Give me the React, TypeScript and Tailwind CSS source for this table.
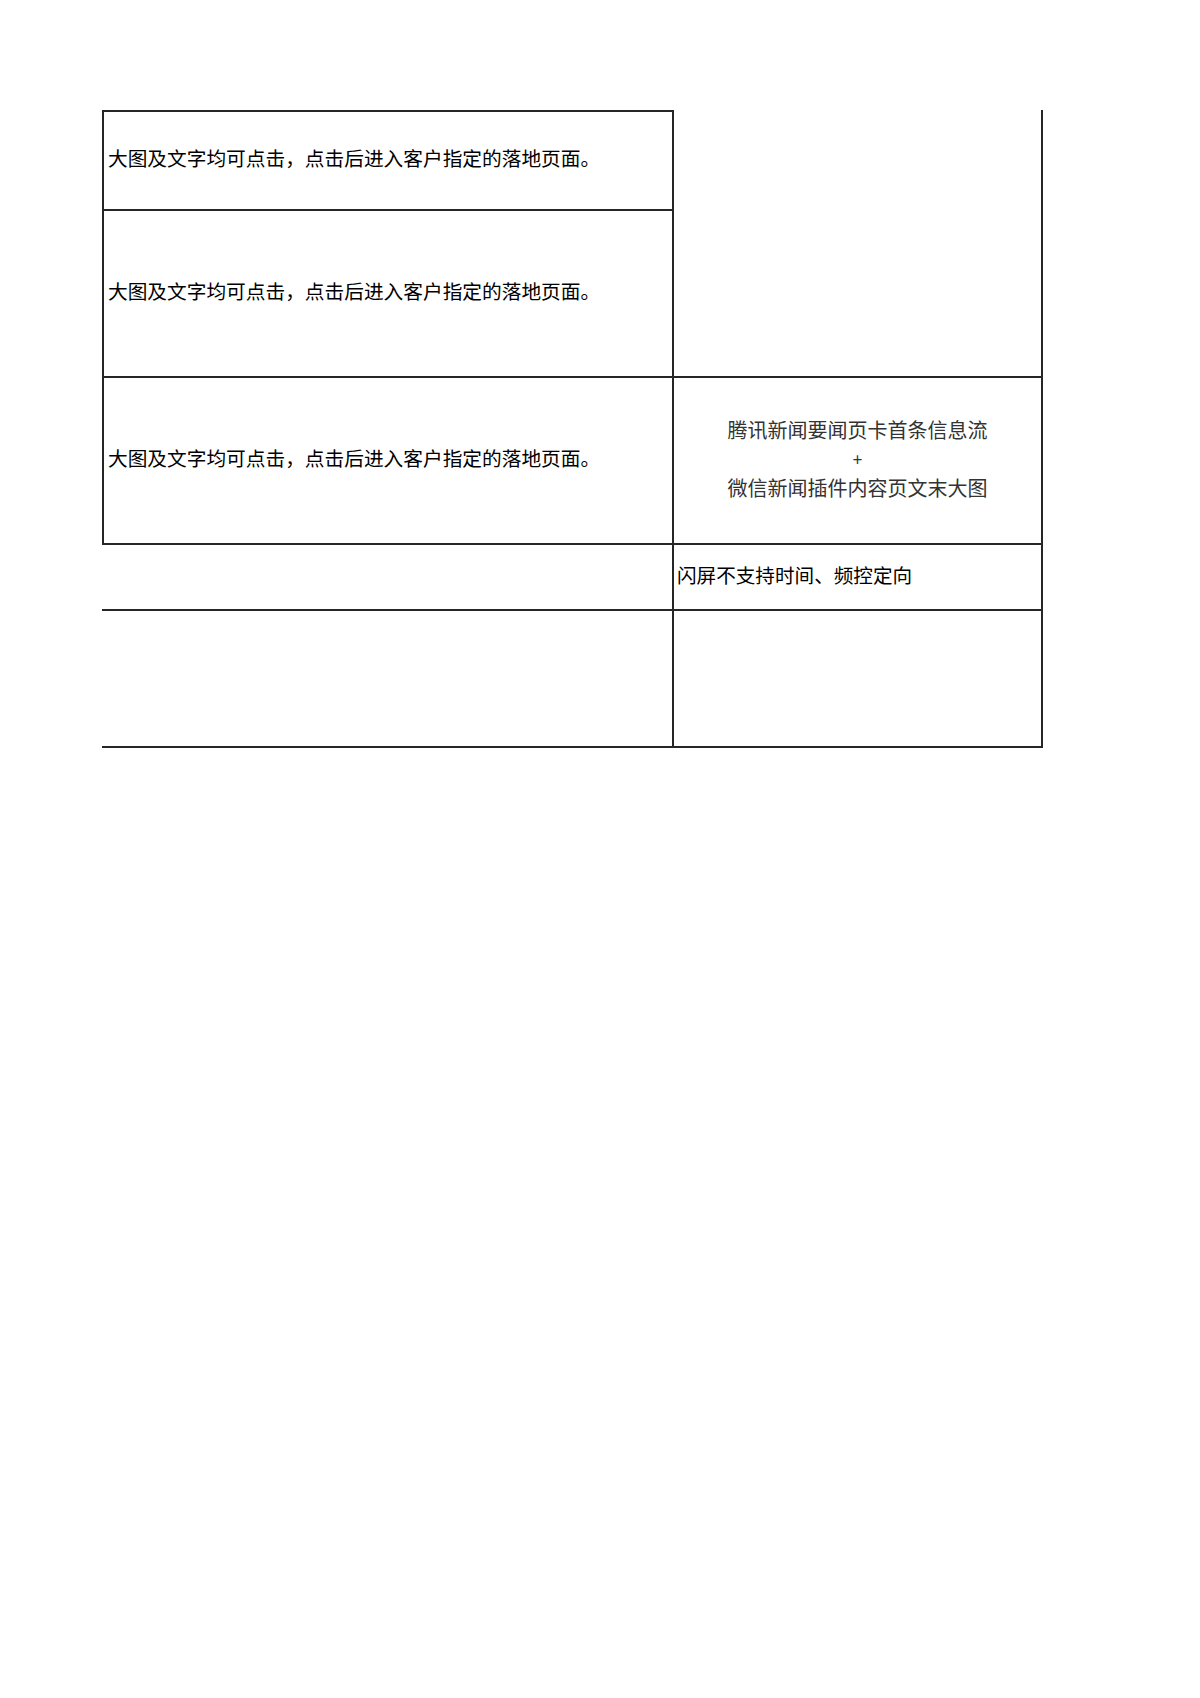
const LANDING = '大图及文字均可点击，点击后进入客户指定的落地页面。';

export default function App() {
  return (
    <div className="min-h-[1698px] w-[1200px] bg-white pt-[110px] pl-[102px] font-['Noto_Sans_CJK_SC',sans-serif] text-black">
      <div className="grid w-[941px] grid-cols-[570px_371px] grid-rows-[99px_167px_167px_66px_139px]">
        {/* row 1 */}
        <div className="flex items-center border-t-2 border-l-2 border-[#262626] pb-[6px] pl-[4px] text-[19.7px]">
          {LANDING}
        </div>
        <div className="row-span-2 border-x-2 border-[#262626]" />

        {/* row 2 */}
        <div className="flex items-center border-t-2 border-l-2 border-[#262626] pb-[6px] pl-[4px] text-[19.7px]">
          {LANDING}
        </div>

        {/* row 3 */}
        <div className="flex items-center border-t-2 border-l-2 border-[#262626] pb-[6px] pl-[4px] text-[19.7px]">
          {LANDING}
        </div>
        <div className="flex flex-col items-center justify-center border-t-2 border-x-2 border-[#262626] pb-[4px] text-[20px] leading-[29px] text-[#333]">
          <span>腾讯新闻要闻页卡首条信息流</span>
          <span className="text-[17px]">+</span>
          <span>微信新闻插件内容页文末大图</span>
        </div>

        {/* row 4 */}
        <div className="border-t-2 border-[#262626]" />
        <div className="flex items-center border-t-2 border-x-2 border-[#262626] pb-[4px] pl-[3px] text-[19.6px]">
          闪屏不支持时间、频控定向
        </div>

        {/* row 5 */}
        <div className="border-y-2 border-[#262626]" />
        <div className="border-2 border-[#262626]" />
      </div>
    </div>
  );
}
